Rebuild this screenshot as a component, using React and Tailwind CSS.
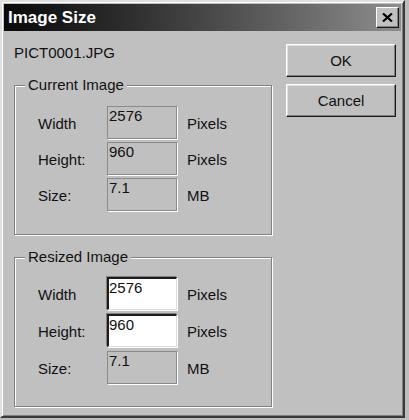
import React from 'react';

const Field = ({ value, enabled }) =>
    enabled ? (
        <div className="w-[70px] h-[33px] bg-white border-t-2 border-l-2 border-t-[#1c1c1c] border-l-[#1c1c1c] border-r border-b border-r-[#dcdcdc] border-b-[#dcdcdc] shadow-[-1px_-1px_0_#808080,1px_1px_0_#ffffff] leading-[18px]">
            {value}
        </div>
    ) : (
        <div className="w-[70px] h-[33px] border border-[#8a8a8a] shadow-[1px_1px_0_#ffffff] pl-[1px] leading-[18px]">
            {value}
        </div>
    );

const Row = ({ label, value, unit, enabled }) => (
    <div className="flex items-center">
        <span className="w-[69px] mt-[3px] leading-[18px]">{label}</span>
        <Field value={value} enabled={enabled} />
        <span className="ml-[10px] mt-[3px] leading-[18px]">{unit}</span>
    </div>
);

const Group = ({ title, enabled, className, rowsClass }) => (
    <fieldset className={`border border-[#808080] shadow-[inset_1px_1px_0_#ffffff,1px_1px_0_#ffffff] ${className}`}>
        <legend className="ml-[10px] px-[3px] bg-[#c0c0c0] leading-[18px]">{title}</legend>
        <div className={`pl-[23px] flex flex-col ${rowsClass}`}>
            <Row label="Width" value="2576" unit="Pixels" enabled={enabled} />
            <Row label="Height:" value="960" unit="Pixels" enabled={enabled} />
            <Row label="Size:" value="7.1" unit="MB" />
        </div>
    </fieldset>
);

const Button = ({ children }) => (
    <button className="w-[110px] h-[33px] bg-[#c0c0c0] border border-t-white border-l-white border-r-[#1a1a1a] border-b-[#1a1a1a] shadow-[inset_-1px_-1px_0_#808080,inset_1px_1px_0_#dfdfdf] leading-[18px] text-[#111]">
        {children}
    </button>
);

const App = () => {
    return (
        <div className="w-[409px] h-[420px] bg-[#bdbdbd] font-['Liberation_Sans',Arial,sans-serif] text-[15px] text-[#111]">
            <div className="w-[405px] h-[418px] bg-[#c0c0c0] border-2 border-t-[#dfdfdf] border-l-[#dfdfdf] border-r-[#3a3a3a] border-b-[#3a3a3a] shadow-[inset_1px_1px_0_#ffffff,inset_-1px_-1px_0_#808080] p-[2px] flex flex-col">
                {/* title bar */}
                <div className="h-[27px] flex items-center justify-between bg-linear-to-r from-[#0a0a0a] to-[#8e8e8e]">
                    <span className="pl-[4px] text-[17px] font-bold text-white leading-none">Image Size</span>
                    <div className="w-[23px] h-[21px] mr-[2px] bg-[#c0c0c0] border border-t-white border-l-white border-r-[#1a1a1a] border-b-[#1a1a1a] shadow-[inset_-1px_-1px_0_#808080] flex items-center justify-center">
                        <svg width="11" height="9" viewBox="0 0 11 9">
                            <path d="M1 0.5 L10 8.5 M10 0.5 L1 8.5" stroke="#000" strokeWidth="2.2" />
                        </svg>
                    </div>
                </div>

                <div className="flex pt-[13px] pl-[10px]">
                    <div className="w-[258px]">
                        <div className="leading-[18px] h-[18px]">PICT0001.JPG</div>
                        <Group title="Current Image" className="mt-[14px]" rowsClass="pt-[12px] pb-[23px] gap-[3px]" />
                        <Group title="Resized Image" enabled className="mt-[13px]" rowsClass="pt-[11px] pb-[22px] gap-[4px]" />
                    </div>
                    <div className="ml-[14px] flex flex-col gap-[7px]">
                        <Button>OK</Button>
                        <Button>Cancel</Button>
                    </div>
                </div>
            </div>
        </div>
    );
};

export default App;
